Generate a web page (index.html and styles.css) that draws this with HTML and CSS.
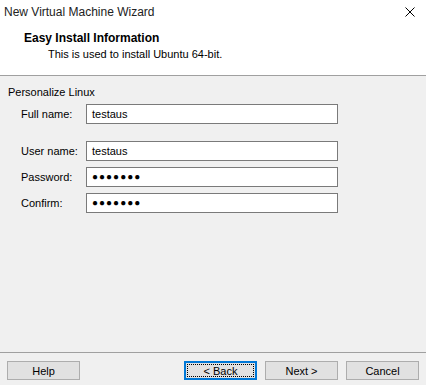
FILE: index.html
```html
<!DOCTYPE html>
<html>
<head>
<meta charset="utf-8">
<link rel="stylesheet" href="styles.css">
</head>
<body>
<div class="window">
  <div class="titlebar">
    <span class="title">New Virtual Machine Wizard</span>
    <svg class="close" width="10" height="10" viewBox="0 0 10 10"><path d="M0.5 0.5 L9.5 9.5 M9.5 0.5 L0.5 9.5" stroke="#000" stroke-width="1" fill="none"/></svg>
  </div>
  <div class="header">
    <div class="heading">Easy Install Information</div>
    <div class="subtitle">This is used to install Ubuntu 64-bit.</div>
  </div>
  <div class="content">
    <div class="group-label">Personalize Linux</div>
    <div class="row first">
      <span class="label">Full name:</span>
      <div class="field">testaus</div>
    </div>
    <div class="row gap">
      <span class="label">User name:</span>
      <div class="field">testaus</div>
    </div>
    <div class="row">
      <span class="label">Password:</span>
      <div class="field dots">●●●●●●●</div>
    </div>
    <div class="row">
      <span class="label">Confirm:</span>
      <div class="field dots">●●●●●●●</div>
    </div>
  </div>
  <div class="footer">
    <button class="btn">Help</button>
    <div class="spacer"></div>
    <button class="btn focused"><span class="focus-rect">&lt; Back</span></button>
    <button class="btn">Next &gt;</button>
    <button class="btn">Cancel</button>
  </div>
</div>
</body>
</html>
```

FILE: styles.css
```css
* { box-sizing: border-box; }
html, body { margin: 0; padding: 0; }
body {
  font-family: "Liberation Sans", Arial, sans-serif;
  font-size: 11px;
  color: #000;
  background: #f0f0f0;
}
.window {
  width: 426px;
  height: 385px;
  display: flex;
  flex-direction: column;
  background: #f0f0f0;
}
.titlebar {
  height: 25px;
  background: #fff;
  display: flex;
  align-items: center;
  justify-content: space-between;
  padding: 0 11px 1px 4px;
}
.title {
  font-family: "Liberation Sans", Arial, sans-serif;
  font-size: 12px;
  color: #222;
}
.close { display: block; }
.header {
  background: #fff;
  height: 51px;
  padding-top: 5px;
  border-bottom: 1px solid #a0a0a0;
}
.heading {
  font-weight: bold;
  font-size: 12px;
  line-height: 16px;
  padding-left: 24px;
}
.subtitle {
  line-height: 16px;
  padding-left: 48px;
}
.content {
  flex: 1;
  padding: 8px 0 0 8px;
}
.group-label {
  line-height: 16px;
  margin-bottom: 4px;
}
.row {
  display: flex;
  align-items: center;
  height: 20px;
  margin-top: 6px;
}
.row.first { margin-top: 0; }
.row.gap { margin-top: 17px; }
.label {
  width: 78px;
  padding-left: 13px;
}
.field {
  width: 252px;
  height: 20px;
  background: #fff;
  border: 1px solid #7a7a7a;
  padding-left: 5px;
  line-height: 18px;
}
.dots {
  font-size: 10px;
  letter-spacing: 1px;
  line-height: 18px;
}
.footer {
  height: 33px;
  border-top: 1px solid #a0a0a0;
  display: flex;
  align-items: flex-start;
  padding: 8px 7px 0 7px;
  gap: 8px;
}
.spacer { flex: 1; }
.btn {
  width: 73px;
  height: 19px;
  background: #e1e1e1;
  border: 1px solid #adadad;
  font-family: "Liberation Sans", Arial, sans-serif;
  font-size: 11px;
  color: #000;
  padding: 0;
  margin: 0;
  display: flex;
  align-items: center;
  justify-content: center;
}
.btn.focused {
  border: 1px solid #0078d7;
  box-shadow: inset 0 0 0 1px #0078d7;
  padding: 2px;
}
.focus-rect {
  width: 100%;
  height: 100%;
  border: 1px dotted #000;
  display: flex;
  align-items: center;
  justify-content: center;
}
```
